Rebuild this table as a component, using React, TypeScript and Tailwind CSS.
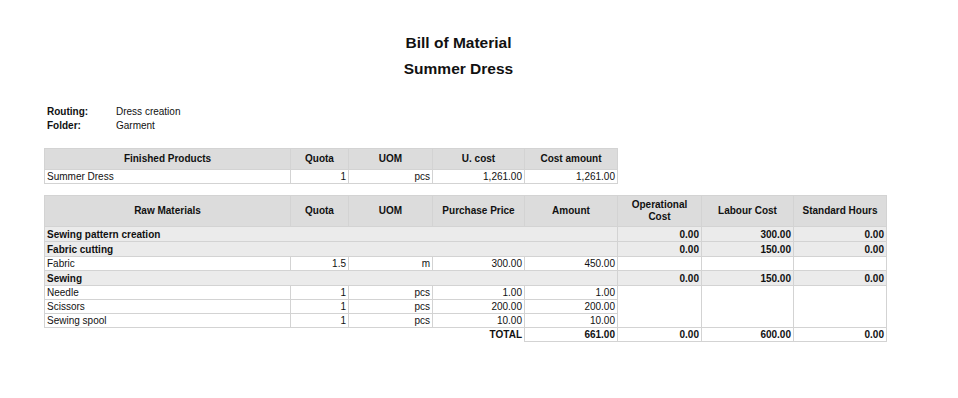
import React from "react";

const cell = "border border-[#d3d3d3] px-[2px] py-0 leading-[13px] h-[14px]";
const head = "border border-[#d3d3d3] bg-[#dcdcdc] font-bold text-center px-[2px] leading-[12px]";

type Item = { name: string; quota: string; uom: string; price: string; amount: string };

const sewing: Item[] = [
  { name: "Needle", quota: "1", uom: "pcs", price: "1.00", amount: "1.00" },
  { name: "Scissors", quota: "1", uom: "pcs", price: "200.00", amount: "200.00" },
  { name: "Sewing spool", quota: "1", uom: "pcs", price: "10.00", amount: "10.00" },
];

function GroupRow({ name, op, labour, hours }: { name: string; op: string; labour: string; hours: string }) {
  return (
    <tr className="bg-[#ebebeb] font-bold h-[15px]">
      <td colSpan={5} className={cell}>
        {name}
      </td>
      <td className={`${cell} text-right`}>{op}</td>
      <td className={`${cell} text-right`}>{labour}</td>
      <td className={`${cell} text-right`}>{hours}</td>
    </tr>
  );
}

export default function App() {
  return (
    <div className="w-[958px] h-[398px] bg-white text-[#111] text-[10px] font-['Liberation_Sans',Arial,sans-serif]">
      <div className="pt-[30px] pr-[41px] text-center font-bold text-[15.5px] leading-[26px]">
        <div>Bill of Material</div>
        <div>Summer Dress</div>
      </div>

      <div className="mt-[23px] pl-[47px] leading-[14px]">
        <div className="flex">
          <span className="w-[69px] font-bold">Routing:</span>
          <span>Dress creation</span>
        </div>
        <div className="flex">
          <span className="w-[69px] font-bold">Folder:</span>
          <span>Garment</span>
        </div>
      </div>

      <div className="pl-[44px]">
        <table className="mt-[15px] w-[573px] table-fixed border-collapse">
          <colgroup>
            <col className="w-[246px]" />
            <col className="w-[58px]" />
            <col className="w-[84px]" />
            <col className="w-[92px]" />
            <col className="w-[93px]" />
          </colgroup>
          <thead>
            <tr className="h-[21px]">
              <th className={head}>Finished Products</th>
              <th className={head}>Quota</th>
              <th className={head}>UOM</th>
              <th className={head}>U. cost</th>
              <th className={head}>Cost amount</th>
            </tr>
          </thead>
          <tbody>
            <tr>
              <td className={cell}>Summer Dress</td>
              <td className={`${cell} text-right`}>1</td>
              <td className={`${cell} text-right`}>pcs</td>
              <td className={`${cell} text-right`}>1,261.00</td>
              <td className={`${cell} text-right`}>1,261.00</td>
            </tr>
          </tbody>
        </table>

        <table className="mt-[11px] w-[842px] table-fixed border-collapse">
          <colgroup>
            <col className="w-[246px]" />
            <col className="w-[58px]" />
            <col className="w-[84px]" />
            <col className="w-[92px]" />
            <col className="w-[93px]" />
            <col className="w-[84px]" />
            <col className="w-[92px]" />
            <col className="w-[93px]" />
          </colgroup>
          <thead>
            <tr className="h-[31px]">
              <th className={head}>Raw Materials</th>
              <th className={head}>Quota</th>
              <th className={head}>UOM</th>
              <th className={head}>Purchase Price</th>
              <th className={head}>Amount</th>
              <th className={head}>
                Operational
                <br />
                Cost
              </th>
              <th className={head}>Labour Cost</th>
              <th className={head}>Standard Hours</th>
            </tr>
          </thead>
          <tbody>
            <GroupRow name="Sewing pattern creation" op="0.00" labour="300.00" hours="0.00" />
            <GroupRow name="Fabric cutting" op="0.00" labour="150.00" hours="0.00" />
            <tr>
              <td className={cell}>Fabric</td>
              <td className={`${cell} text-right`}>1.5</td>
              <td className={`${cell} text-right`}>m</td>
              <td className={`${cell} text-right`}>300.00</td>
              <td className={`${cell} text-right`}>450.00</td>
              <td className={cell}></td>
              <td className={cell}></td>
              <td className={cell}></td>
            </tr>
            <GroupRow name="Sewing" op="0.00" labour="150.00" hours="0.00" />
            {sewing.map((it, i) => (
              <tr key={it.name}>
                <td className={cell}>{it.name}</td>
                <td className={`${cell} text-right`}>{it.quota}</td>
                <td className={`${cell} text-right`}>{it.uom}</td>
                <td className={`${cell} text-right`}>{it.price}</td>
                <td className={`${cell} text-right`}>{it.amount}</td>
                {i === 0 ? (
                  <>
                    <td rowSpan={3} className={cell}></td>
                    <td rowSpan={3} className={cell}></td>
                    <td rowSpan={3} className={cell}></td>
                  </>
                ) : null}
              </tr>
            ))}
            <tr className="font-bold">
              <td colSpan={3} className="h-[14px] p-0"></td>
              <td className="px-[2px] py-0 leading-[13px] text-right">TOTAL</td>
              <td className={`${cell} text-right`}>661.00</td>
              <td className={`${cell} text-right`}>0.00</td>
              <td className={`${cell} text-right`}>600.00</td>
              <td className={`${cell} text-right`}>0.00</td>
            </tr>
          </tbody>
        </table>
      </div>
    </div>
  );
}
